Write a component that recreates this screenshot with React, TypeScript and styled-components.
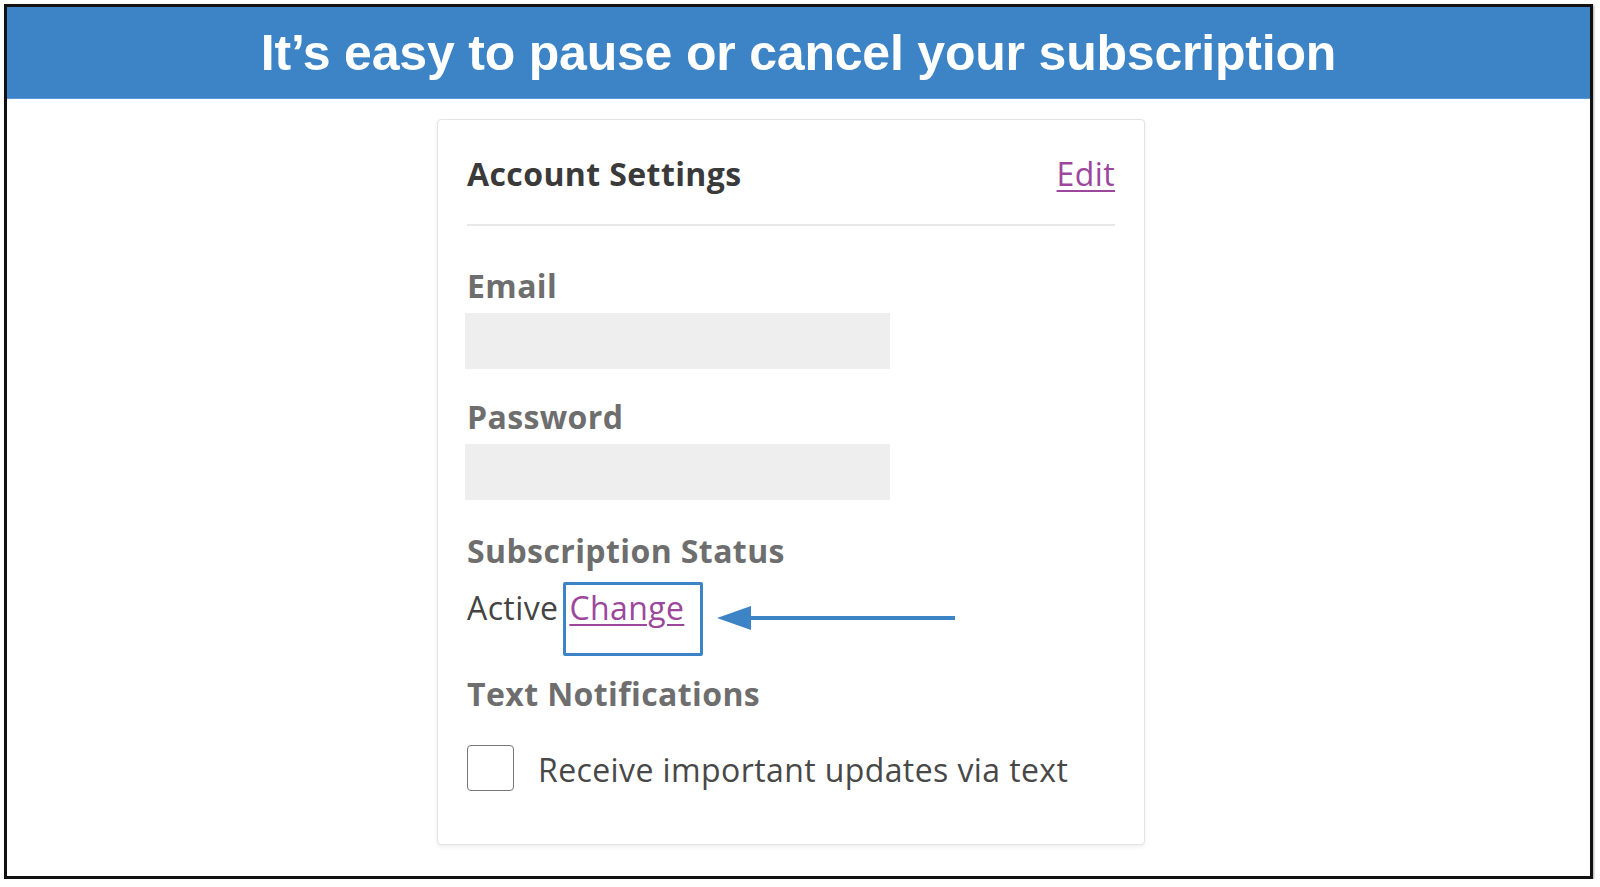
import React from 'react';
import styled, { createGlobalStyle } from 'styled-components';

const GlobalStyle = createGlobalStyle`
  html, body {
    margin: 0;
    padding: 0;
    background: #ffffff;
  }
  body {
    font-family: "Open Sans", "Noto Sans", sans-serif;
  }
`;

const Frame = styled.div`
  box-sizing: border-box;
  margin: 4px 0 0 4px;
  width: 1589px;
  height: 875px;
  border: 3px solid #111111;
  box-shadow: 1px 1px 2px rgba(0, 0, 0, 0.35);
  background: #ffffff;
`;

const Banner = styled.div`
  height: 92px;
  background: #3d84c6;
  border-bottom: 1px solid #5a9ad6;
  box-sizing: border-box;
  display: flex;
  align-items: center;
  justify-content: center;
`;

const BannerTitle = styled.h1`
  margin: 0;
  font-family: "Liberation Sans", Arial, sans-serif;
  font-weight: 700;
  font-size: 50px;
  line-height: 1;
  color: #ffffff;
  letter-spacing: -0.2px;
`;

const Card = styled.section`
  box-sizing: border-box;
  width: 708px;
  margin: 20px 0 0 430px;
  padding: 0 29px 53px 29px;
  border: 1px solid #e3e3e3;
  border-radius: 4px;
  box-shadow: 0 2px 4px rgba(0, 0, 0, 0.07);
  background: #ffffff;
`;

const CardHeader = styled.div`
  display: flex;
  justify-content: space-between;
  align-items: flex-start;
  padding: 36px 0 32px;
  border-bottom: 2px solid #e8e8e8;
`;

const CardTitle = styled.h2`
  margin: 0;
  font-size: 32px;
  line-height: 36px;
  letter-spacing: 0.4px;
  font-weight: 700;
  color: #3a3a3a;
`;

const LinkText = styled.a`
  font-size: 32px;
  line-height: 36px;
  letter-spacing: 0.4px;
  color: #9c479c;
  text-decoration: underline;
  text-decoration-thickness: 2px;
  text-underline-offset: 4px;
  cursor: pointer;
`;

const FieldLabel = styled.div<{ $gap: number }>`
  margin-top: ${({ $gap }) => $gap}px;
  font-size: 32px;
  line-height: 36px;
  letter-spacing: 0.4px;
  font-weight: 700;
  color: #6e6e6e;
`;

const FieldBox = styled.div`
  margin: 9px 0 0 -2px;
  width: 425px;
  height: 56px;
  background: #eeeeee;
`;

const StatusRow = styled.div`
  position: relative;
  display: flex;
  align-items: flex-start;
  margin-top: 13px;
`;

const StatusText = styled.span`
  margin-top: 8px;
  font-size: 32px;
  line-height: 36px;
  letter-spacing: 0.4px;
  color: #444444;
`;

const Highlight = styled.div`
  box-sizing: border-box;
  margin-left: 5px;
  height: 74px;
  padding: 5px 16px 0 3px;
  border: 3px solid #3d84c6;
  border-radius: 2px;
`;

const Arrow = styled.svg`
  position: absolute;
  left: 250px;
  top: 22px;
`;

const CheckRow = styled.label`
  display: flex;
  align-items: center;
  gap: 24px;
  margin-top: 33px;
`;

const CheckBox = styled.span`
  box-sizing: border-box;
  width: 47px;
  height: 46px;
  border: 1.5px solid #777777;
  border-radius: 4px;
  background: #ffffff;
`;

const CheckText = styled.span`
  margin-top: 3px;
  font-size: 32px;
  line-height: 36px;
  letter-spacing: 0.4px;
  color: #484848;
`;

const App: React.FC = () => {
  return (
    <>
      <GlobalStyle />
      <Frame>
        <Banner>
          <BannerTitle>It’s easy to pause or cancel your subscription</BannerTitle>
        </Banner>
        <Card>
          <CardHeader>
            <CardTitle>Account Settings</CardTitle>
            <LinkText>Edit</LinkText>
          </CardHeader>

          <FieldLabel $gap={42}>Email</FieldLabel>
          <FieldBox />

          <FieldLabel $gap={30}>Password</FieldLabel>
          <FieldBox />

          <FieldLabel $gap={33}>Subscription Status</FieldLabel>
          <StatusRow>
            <StatusText>Active</StatusText>
            <Highlight>
              <LinkText>Change</LinkText>
            </Highlight>
            <Arrow width="240" height="26" viewBox="0 0 240 26">
              <polygon points="0,14 34,2 34,26" fill="#3d84c6" />
              <rect x="30" y="12" width="208" height="4" fill="#3d84c6" />
            </Arrow>
          </StatusRow>

          <FieldLabel $gap={20}>Text Notifications</FieldLabel>
          <CheckRow>
            <CheckBox />
            <CheckText>Receive important updates via text</CheckText>
          </CheckRow>
        </Card>
      </Frame>
    </>
  );
};

export default App;
